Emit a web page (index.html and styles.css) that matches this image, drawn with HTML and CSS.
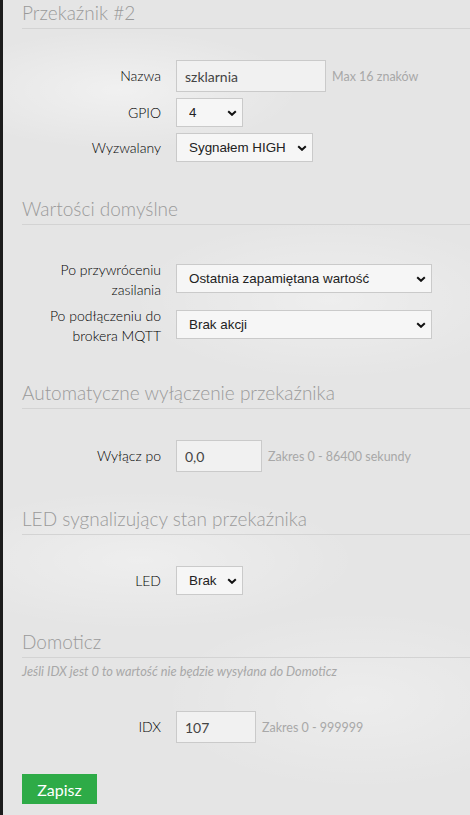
FILE: index.html
```html
<!DOCTYPE html>
<html lang="pl">
<head>
<meta charset="utf-8">
<title>Przekaźnik #2</title>
<link rel="stylesheet" href="styles.css">
</head>
<body>
<div class="edge"></div>
<main class="content">
  <section class="section">
    <h2 class="heading">Przekaźnik #2</h2>
    <div class="fields">
      <div class="row">
        <label class="label">Nazwa</label>
        <input class="text w-name" type="text" value="szklarnia">
        <span class="hint">Max 16 znaków</span>
      </div>
      <div class="row">
        <label class="label">GPIO</label>
        <div class="sel w-small">
          <select><option>4</option></select>
          <svg class="chev" width="10" height="6" viewBox="0 0 10 6"><path d="M1.2 1.2 L5 4.8 L8.8 1.2" fill="none" stroke="#111" stroke-width="2"/></svg>
        </div>
      </div>
      <div class="row">
        <label class="label">Wyzwalany</label>
        <div class="sel w-mid">
          <select><option>Sygnałem HIGH</option></select>
          <svg class="chev" width="10" height="6" viewBox="0 0 10 6"><path d="M1.2 1.2 L5 4.8 L8.8 1.2" fill="none" stroke="#111" stroke-width="2"/></svg>
        </div>
      </div>
    </div>
  </section>

  <section class="section">
    <h2 class="heading">Wartości domyślne</h2>
    <div class="fields multi">
      <div class="row">
        <label class="label two">Po przywróceniu zasilania</label>
        <div class="sel w-wide">
          <select><option>Ostatnia zapamiętana wartość</option></select>
          <svg class="chev" width="10" height="6" viewBox="0 0 10 6"><path d="M1.2 1.2 L5 4.8 L8.8 1.2" fill="none" stroke="#111" stroke-width="2"/></svg>
        </div>
      </div>
      <div class="row">
        <label class="label two">Po podłączeniu do brokera MQTT</label>
        <div class="sel w-wide">
          <select><option>Brak akcji</option></select>
          <svg class="chev" width="10" height="6" viewBox="0 0 10 6"><path d="M1.2 1.2 L5 4.8 L8.8 1.2" fill="none" stroke="#111" stroke-width="2"/></svg>
        </div>
      </div>
    </div>
  </section>

  <section class="section">
    <h2 class="heading">Automatyczne wyłączenie przekaźnika</h2>
    <div class="fields">
      <div class="row">
        <label class="label">Wyłącz po</label>
        <input class="text w-time" type="text" value="0,0">
        <span class="hint">Zakres 0 - 86400 sekundy</span>
      </div>
    </div>
  </section>

  <section class="section">
    <h2 class="heading">LED sygnalizujący stan przekaźnika</h2>
    <div class="fields">
      <div class="row">
        <label class="label">LED</label>
        <div class="sel w-small">
          <select><option>Brak</option></select>
          <svg class="chev" width="10" height="6" viewBox="0 0 10 6"><path d="M1.2 1.2 L5 4.8 L8.8 1.2" fill="none" stroke="#111" stroke-width="2"/></svg>
        </div>
      </div>
    </div>
  </section>

  <section class="section">
    <h2 class="heading">Domoticz</h2>
    <p class="note">Jeśli IDX jest 0 to wartość nie będzie wysyłana do Domoticz</p>
    <div class="fields">
      <div class="row">
        <label class="label">IDX</label>
        <input class="text w-idx" type="text" value="107">
        <span class="hint">Zakres 0 - 999999</span>
      </div>
    </div>
  </section>

  <button class="save" type="button">Zapisz</button>
</main>
</body>
</html>
```
FILE: styles.css
```css
html, body {
  margin: 0;
  padding: 0;
  height: 100%;
}
body {
  display: flex;
  font-family: Lato, "Noto Sans", sans-serif;
  color: #333;
  background-color: #e5e5e5;
  background-image:
    radial-gradient(ellipse 180px 60px at 120px 90px, rgba(255,255,255,0.45), rgba(255,255,255,0)),
    radial-gradient(ellipse 200px 80px at 330px 300px, rgba(255,255,255,0.35), rgba(255,255,255,0)),
    radial-gradient(ellipse 220px 70px at 140px 560px, rgba(255,255,255,0.35), rgba(255,255,255,0)),
    radial-gradient(ellipse 200px 90px at 360px 700px, rgba(255,255,255,0.3), rgba(255,255,255,0));
  overflow: hidden;
}
.edge {
  width: 3px;
  flex: none;
  background: #1c1c1c;
}
.content {
  flex: 1;
  padding-left: 19px;
}
.section + .section {
  margin-top: 34px;
}
.heading {
  margin: 0;
  padding: 1px 0 3px;
  font-size: 19px;
  line-height: 24px;
  font-weight: 300;
  color: #9a9a9a;
  border-bottom: 1px solid #d3d3d3;
}
.fields {
  padding-top: 31px;
  display: flex;
  flex-direction: column;
  gap: 6px;
}
.fields.multi {
  gap: 2px;
}
.row {
  display: flex;
  align-items: center;
}
.label {
  width: 139px;
  flex: none;
  margin-right: 15px;
  text-align: right;
  font-size: 14px;
  line-height: 20px;
  font-weight: 300;
  color: #000;
}
.label.two {
  padding-top: 4px;
}
.text {
  box-sizing: border-box;
  height: 32px;
  margin: 0;
  padding: 0 8px;
  border: 1px solid #cacaca;
  border-radius: 0;
  background: #f1f1f1;
  font-family: Lato, "Noto Sans", sans-serif;
  font-size: 14px;
  font-weight: 400;
  color: #444;
  outline: none;
}
.w-name { width: 150px; }
.w-time { width: 86px; }
.w-idx { width: 80px; }
.hint {
  margin-left: 6px;
  font-size: 12.5px;
  color: #a8a8a8;
}
.sel {
  position: relative;
  height: 29px;
}
.sel select {
  box-sizing: border-box;
  width: 100%;
  height: 29px;
  margin: 0;
  padding: 0 22px 0 12px;
  border: 1px solid #cacaca;
  border-radius: 0;
  background: #f6f6f6;
  -webkit-appearance: none;
  appearance: none;
  font-family: "Liberation Sans", Arial, sans-serif;
  font-size: 13.4px;
  color: #222;
  outline: none;
}
.sel .chev {
  position: absolute;
  right: 6px;
  top: 12px;
  pointer-events: none;
}
.w-small { width: 67px; }
.w-mid { width: 137px; }
.w-wide { width: 256px; }
.note {
  margin: 4px 0 0;
  font-size: 12.8px;
  line-height: 18px;
  font-style: italic;
  color: #a8a8a8;
}
.save {
  display: block;
  margin-top: 31px;
  width: 75px;
  height: 30px;
  padding: 0;
  border: 0;
  border-radius: 0;
  background: #2eab47;
  color: #fff;
  font-family: Lato, "Noto Sans", sans-serif;
  font-size: 16px;
}
```
